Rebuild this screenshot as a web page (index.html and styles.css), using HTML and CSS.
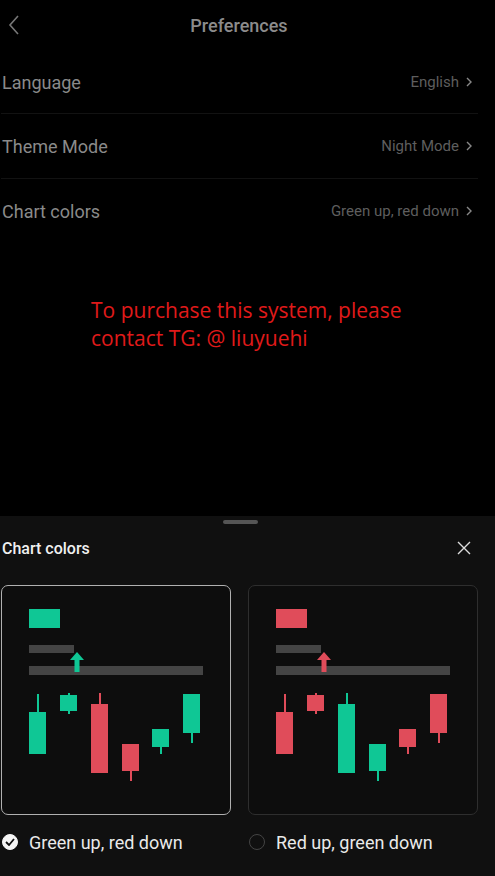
FILE: index.html
```html
<!DOCTYPE html>
<html>
<head>
<meta charset="utf-8">
<link rel="stylesheet" href="styles.css">
</head>
<body>
<div class="page">
  <header class="topbar">
    <svg class="back" width="12" height="20" viewBox="0 0 12 20"><path d="M10 1 L2 10 L10 19" fill="none" stroke="#777" stroke-width="1.6"/></svg>
    <div class="title">Preferences</div>
  </header>
  <ul class="list">
    <li class="row"><span class="label">Language</span><span class="value">English<svg class="chev" width="6" height="10" viewBox="0 0 6 10"><path d="M1 1 L5 5 L1 9" fill="none" stroke="#888" stroke-width="1.4"/></svg></span></li>
    <li class="row"><span class="label">Theme Mode</span><span class="value">Night Mode<svg class="chev" width="6" height="10" viewBox="0 0 6 10"><path d="M1 1 L5 5 L1 9" fill="none" stroke="#888" stroke-width="1.4"/></svg></span></li>
    <li class="row"><span class="label">Chart colors</span><span class="value">Green up, red down<svg class="chev" width="6" height="10" viewBox="0 0 6 10"><path d="M1 1 L5 5 L1 9" fill="none" stroke="#888" stroke-width="1.4"/></svg></span></li>
  </ul>
  <p class="notice">To purchase this system, please<br>contact TG: @ liuyuehi</p>

  <section class="sheet">
    <div class="handle"></div>
    <div class="sheet-head">
      <span class="sheet-title">Chart colors</span>
      <svg class="close" width="14" height="14" viewBox="0 0 14 14"><path d="M1 1 L13 13 M13 1 L1 13" stroke="#ddd" stroke-width="1.4"/></svg>
    </div>
    <div class="options">
      <div class="option">
        <div class="card selected">
          <svg width="228" height="228" viewBox="0 0 228 228">
            <rect x="27" y="23" width="31" height="19" fill="#0fc795"/>
            <rect x="27" y="59" width="45" height="8" fill="#444"/>
            <rect x="27" y="80" width="174" height="9" fill="#444"/>
            <path d="M75 66 L82 74 L77.5 74 L77.5 86 L72.5 86 L72.5 74 L68 74 Z" fill="#0fc795"/>
            <g fill="#0fc795">
              <rect x="35" y="108" width="2" height="19"/><rect x="27" y="126" width="17" height="42"/>
              <rect x="66" y="107" width="2" height="21"/><rect x="58" y="109" width="17" height="16"/>
              <rect x="158" y="160" width="2" height="8"/><rect x="150" y="143" width="17" height="18"/>
              <rect x="189" y="146" width="2" height="11"/><rect x="181" y="108" width="17" height="39"/>
            </g>
            <g fill="#e04c5a">
              <rect x="97" y="107" width="2" height="12"/><rect x="89" y="118" width="17" height="69"/>
              <rect x="128" y="184" width="2" height="11"/><rect x="120" y="158" width="17" height="27"/>
            </g>
          </svg>
        </div>
        <label class="radio-row"><span class="radio checked"><svg width="10" height="8" viewBox="0 0 10 8"><path d="M1 4 L4 7 L9 1" fill="none" stroke="#111" stroke-width="1.8"/></svg></span>Green up, red down</label>
      </div>
      <div class="option">
        <div class="card">
          <svg width="228" height="228" viewBox="0 0 228 228">
            <rect x="27" y="23" width="31" height="19" fill="#e04c5a"/>
            <rect x="27" y="59" width="45" height="8" fill="#444"/>
            <rect x="27" y="80" width="174" height="9" fill="#444"/>
            <path d="M75 66 L82 74 L77.5 74 L77.5 86 L72.5 86 L72.5 74 L68 74 Z" fill="#e04c5a"/>
            <g fill="#e04c5a">
              <rect x="35" y="108" width="2" height="19"/><rect x="27" y="126" width="17" height="42"/>
              <rect x="66" y="107" width="2" height="21"/><rect x="58" y="109" width="17" height="16"/>
              <rect x="158" y="160" width="2" height="8"/><rect x="150" y="143" width="17" height="18"/>
              <rect x="189" y="146" width="2" height="11"/><rect x="181" y="108" width="17" height="39"/>
            </g>
            <g fill="#0fc795">
              <rect x="97" y="107" width="2" height="12"/><rect x="89" y="118" width="17" height="69"/>
              <rect x="128" y="184" width="2" height="11"/><rect x="120" y="158" width="17" height="27"/>
            </g>
          </svg>
        </div>
        <label class="radio-row"><span class="radio"></span>Red up, green down</label>
      </div>
    </div>
  </section>
</div>
</body>
</html>
```
FILE: styles.css
```css
* { box-sizing: border-box; }
html, body { margin: 0; padding: 0; background: #000; }
body { font-family: Roboto, "Noto Sans", sans-serif; }
.page { width: 495px; height: 876px; display: flex; flex-direction: column; overflow: hidden; }
.topbar { height: 50px; display: flex; align-items: center; justify-content: center; position: relative; }
.back { position: absolute; left: 8px; top: 15px; }
.title { font-size: 18px; font-weight: 500; color: #8c8c8c; margin-left: -17px; }
.list { list-style: none; margin: 0; padding: 0 17px 0 1px; }
.row { height: 65px; display: flex; align-items: center; justify-content: space-between; border-bottom: 1px solid #121212; padding-left: 1px; padding-right: 6px; }
.row:first-child { height: 64px; padding-top: 1px; }
.row:last-child { border-bottom: none; padding-bottom: 1px; }
.label { font-size: 18px; color: #8a8a8a; }
.value { font-size: 15px; color: #5e5e5e; display: flex; align-items: center; gap: 7px; }
.chev { display: block; }
.notice { margin: 52px 0 0 91px; font-family: "Open Sans", sans-serif; font-size: 21px; line-height: 28px; color: #e01a1a; }
.sheet { margin-top: auto; height: 360px; background: #101010; padding: 0 17px 0 1px; display: flex; flex-direction: column; }
.handle { width: 35px; height: 4px; border-radius: 2px; background: #555; margin: 4px auto 0 222px; }
.sheet-head { height: 48px; display: flex; align-items: center; justify-content: space-between; padding-left: 1px; padding-right: 7px; }
.sheet-title { font-size: 16px; font-weight: 500; color: #f0f0f0; }
.close { display: block; }
.options { display: grid; grid-template-columns: 230px 230px; column-gap: 17px; margin-top: 13px; }
.card { width: 230px; height: 230px; border: 1px solid #2e2e2e; border-radius: 7px; background: #0d0d0d; overflow: hidden; }
.card svg { display: block; }
.card.selected { border-color: #b0b0b0; }
.radio-row { display: flex; align-items: center; gap: 11px; margin-top: 17px; margin-left: 1px; font-size: 18px; color: #eaeaea; height: 20px; }
.radio { width: 16px; height: 16px; border-radius: 50%; border: 1px solid #444; display: flex; align-items: center; justify-content: center; flex: none; }
.radio.checked { background: #f5f5f5; border-color: #f5f5f5; }
.radio svg { display: block; }
```
